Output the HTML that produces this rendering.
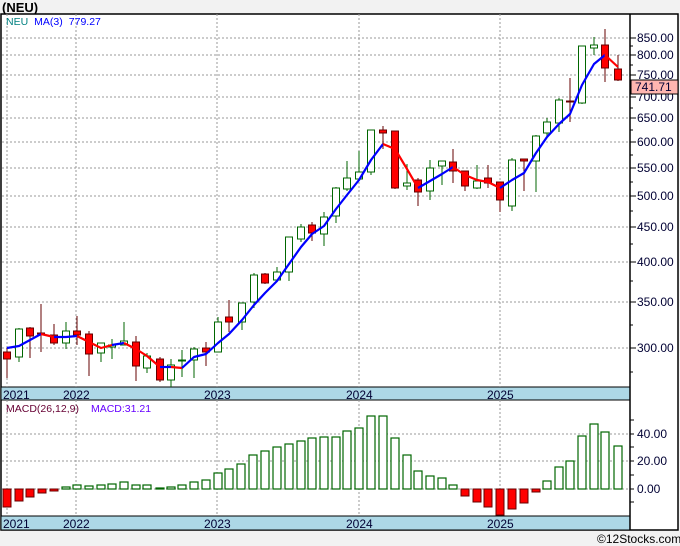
<!DOCTYPE html>
<html><head><meta charset="utf-8"><style>
html,body{margin:0;padding:0;background:#f2f2f2;}
svg{display:block;font-family:"Liberation Sans",sans-serif;}
</style></head><body>
<svg width="680" height="546" viewBox="0 0 680 546" xmlns="http://www.w3.org/2000/svg">
<rect x="0" y="0" width="680" height="546" fill="#f2f2f2"/>
<text x="2" y="12" font-size="13" font-weight="bold" fill="#000">(NEU)</text>
<rect x="1" y="14" width="677" height="516" fill="#fff" stroke="#000" stroke-width="1.5"/>
<!-- strips -->
<rect x="1" y="387" width="629" height="13" fill="#add8e6" stroke="#000" stroke-width="1"/>
<rect x="1" y="516" width="629" height="14" fill="#add8e6" stroke="#000" stroke-width="1"/>
<line x1="630" y1="14" x2="630" y2="530" stroke="#000" stroke-width="1.5"/>
<!-- grid -->
<g stroke="#999" stroke-width="1" stroke-dasharray="2,2">
<line x1="2" y1="38" x2="630" y2="38"/><line x1="2" y1="55" x2="630" y2="55"/><line x1="2" y1="75" x2="630" y2="75"/><line x1="2" y1="97" x2="630" y2="97"/><line x1="2" y1="118" x2="630" y2="118"/><line x1="2" y1="142" x2="630" y2="142"/><line x1="2" y1="168" x2="630" y2="168"/><line x1="2" y1="196" x2="630" y2="196"/><line x1="2" y1="227" x2="630" y2="227"/><line x1="2" y1="262" x2="630" y2="262"/><line x1="2" y1="302" x2="630" y2="302"/><line x1="2" y1="348" x2="630" y2="348"/>
<line x1="2" y1="434" x2="630" y2="434"/><line x1="2" y1="461" x2="630" y2="461"/><line x1="2" y1="489" x2="630" y2="489"/>
<line x1="7" y1="14" x2="7" y2="387"/><line x1="76" y1="14" x2="76" y2="387"/><line x1="217" y1="14" x2="217" y2="387"/><line x1="359" y1="14" x2="359" y2="387"/><line x1="500" y1="14" x2="500" y2="387"/>
<line x1="7" y1="400" x2="7" y2="516"/><line x1="76" y1="400" x2="76" y2="516"/><line x1="217" y1="400" x2="217" y2="516"/><line x1="359" y1="400" x2="359" y2="516"/><line x1="500" y1="400" x2="500" y2="516"/>
</g>
<!-- axis ticks & labels -->
<g stroke="#000" stroke-width="1">
<line x1="630" y1="38" x2="636" y2="38"/><line x1="630" y1="55" x2="636" y2="55"/><line x1="630" y1="75" x2="636" y2="75"/><line x1="630" y1="97" x2="636" y2="97"/><line x1="630" y1="118" x2="636" y2="118"/><line x1="630" y1="142" x2="636" y2="142"/><line x1="630" y1="168" x2="636" y2="168"/><line x1="630" y1="196" x2="636" y2="196"/><line x1="630" y1="227" x2="636" y2="227"/><line x1="630" y1="262" x2="636" y2="262"/><line x1="630" y1="302" x2="636" y2="302"/><line x1="630" y1="348" x2="636" y2="348"/>
<line x1="630" y1="130" x2="633" y2="130"/><line x1="630" y1="155" x2="633" y2="155"/><line x1="630" y1="182" x2="633" y2="182"/><line x1="630" y1="211" x2="633" y2="211"/><line x1="630" y1="244" x2="633" y2="244"/><line x1="630" y1="281" x2="633" y2="281"/><line x1="630" y1="325" x2="633" y2="325"/><line x1="630" y1="372" x2="633" y2="372"/><line x1="630" y1="108" x2="633" y2="108"/><line x1="630" y1="86" x2="633" y2="86"/><line x1="630" y1="65" x2="633" y2="65"/><line x1="630" y1="46" x2="633" y2="46"/>
<line x1="630" y1="420" x2="634" y2="420"/><line x1="630" y1="434" x2="634" y2="434"/><line x1="630" y1="447" x2="634" y2="447"/><line x1="630" y1="461" x2="634" y2="461"/><line x1="630" y1="475" x2="634" y2="475"/><line x1="630" y1="489" x2="634" y2="489"/><line x1="630" y1="502" x2="634" y2="502"/>
</g>
<g font-size="12" fill="#000033">
<text x="637" y="42">850.00</text><text x="637" y="59">800.00</text><text x="637" y="79">750.00</text><text x="637" y="101">700.00</text><text x="637" y="122">650.00</text><text x="637" y="146">600.00</text><text x="637" y="172">550.00</text><text x="637" y="200">500.00</text><text x="637" y="231">450.00</text><text x="637" y="266">400.00</text><text x="637" y="306">350.00</text><text x="637" y="352">300.00</text>
<text x="637" y="438">40.00</text><text x="637" y="465">20.00</text><text x="637" y="493">0.00</text>
</g>
<rect x="631" y="80" width="47" height="14" fill="#ffb6b0" stroke="#000" stroke-width="1"/>
<text x="635" y="91" font-size="12" fill="#000033">741.71</text>
<g font-size="12" fill="#000033">
<text x="3" y="399">2021</text><text x="63" y="399">2022</text><text x="204" y="399">2023</text><text x="346" y="399">2024</text><text x="487" y="399">2025</text>
<text x="3" y="528">2021</text><text x="63" y="528">2022</text><text x="204" y="528">2023</text><text x="346" y="528">2024</text><text x="487" y="528">2025</text>
</g>
<text x="6" y="25" font-size="10.5"><tspan fill="#008080">NEU</tspan><tspan fill="#0000ff" dx="6">MA(3)</tspan><tspan fill="#0000ff" dx="6">779.27</tspan></text>
<text x="6" y="412" font-size="10.5"><tspan fill="#660033">MACD(26,12,9)</tspan><tspan fill="#6600ff" dx="12">MACD:31.21</tspan></text>
<!-- candles -->
<g stroke-width="1">
<g stroke="#660000" fill="#ff0000">
<line x1="7" y1="348" x2="7" y2="378"/><rect x="3.5" y="352" width="7" height="7"/>
<line x1="30" y1="327" x2="30" y2="358"/><rect x="26.5" y="328" width="7" height="8"/>
<line x1="54" y1="324" x2="54" y2="345"/><rect x="50.5" y="335" width="7" height="8"/>
<line x1="77" y1="316" x2="77" y2="345"/><rect x="73.5" y="331" width="7" height="4"/>
<line x1="89" y1="331" x2="89" y2="376"/><rect x="85.5" y="334" width="7" height="20"/>
<line x1="136" y1="336" x2="136" y2="381"/><rect x="132.5" y="342" width="7" height="24"/>
<line x1="160" y1="357" x2="160" y2="382"/><rect x="156.5" y="359" width="7" height="21"/>
<line x1="206" y1="342" x2="206" y2="366"/><rect x="202.5" y="348" width="7" height="4"/>
<line x1="229" y1="300" x2="229" y2="332"/><rect x="225.5" y="317" width="7" height="5"/>
<line x1="265" y1="273" x2="265" y2="284"/><rect x="261.5" y="274" width="7" height="9"/>
<line x1="312" y1="222" x2="312" y2="241"/><rect x="308.5" y="225" width="7" height="8"/>
<line x1="383" y1="126" x2="383" y2="149"/><rect x="379.5" y="130" width="7" height="3"/>
<line x1="395" y1="131" x2="395" y2="189"/><rect x="391.5" y="131" width="7" height="57"/>
<line x1="418" y1="178" x2="418" y2="206"/><rect x="414.5" y="180" width="7" height="12"/>
<line x1="453" y1="149" x2="453" y2="183"/><rect x="449.5" y="162" width="7" height="9"/>
<line x1="465" y1="171" x2="465" y2="191"/><rect x="461.5" y="171" width="7" height="15"/>
<line x1="488" y1="165" x2="488" y2="188"/><rect x="484.5" y="178" width="7" height="5"/>
<line x1="500" y1="182" x2="500" y2="212"/><rect x="496.5" y="182" width="7" height="18"/>
<line x1="524" y1="159" x2="524" y2="191"/><rect x="520.5" y="159" width="7" height="2"/>
<line x1="570" y1="78" x2="570" y2="122"/><rect x="566.5" y="101" width="7" height="1"/>
<line x1="605" y1="29" x2="605" y2="82"/><rect x="601.5" y="45" width="7" height="23"/>
<line x1="618" y1="55" x2="618" y2="81"/><rect x="614.5" y="69" width="7" height="11"/>
<line x1="41" y1="304" x2="41" y2="352"/><rect x="37.5" y="333" width="7" height="1"/>
</g>
<g stroke="#006600" fill="#fff">
<line x1="19" y1="328" x2="19" y2="362"/><rect x="15.5" y="329" width="7" height="28"/>
<line x1="66" y1="322" x2="66" y2="349"/><rect x="62.5" y="331" width="7" height="12"/>
<line x1="101" y1="343" x2="101" y2="362"/><rect x="97.5" y="343" width="7" height="10"/>
<line x1="112" y1="339" x2="112" y2="359"/><rect x="108.5" y="345" width="7" height="2"/>
<line x1="124" y1="322" x2="124" y2="345"/><rect x="120.5" y="341" width="7" height="4"/>
<line x1="147" y1="353" x2="147" y2="373"/><rect x="143.5" y="356" width="7" height="12"/>
<line x1="171" y1="359" x2="171" y2="387"/><rect x="167.5" y="365" width="7" height="15"/>
<line x1="182" y1="350" x2="182" y2="377"/><rect x="178.5" y="360" width="7" height="1"/>
<line x1="194" y1="347" x2="194" y2="378"/><rect x="190.5" y="349" width="7" height="11"/>
<line x1="218" y1="317" x2="218" y2="352"/><rect x="214.5" y="322" width="7" height="30"/>
<line x1="242" y1="303" x2="242" y2="330"/><rect x="238.5" y="303" width="7" height="19"/>
<line x1="254" y1="273" x2="254" y2="308"/><rect x="250.5" y="275" width="7" height="27"/>
<line x1="277" y1="267" x2="277" y2="281"/><rect x="273.5" y="272" width="7" height="8"/>
<line x1="289" y1="237" x2="289" y2="281"/><rect x="285.5" y="237" width="7" height="35"/>
<line x1="301" y1="224" x2="301" y2="242"/><rect x="297.5" y="227" width="7" height="12"/>
<line x1="324" y1="212" x2="324" y2="246"/><rect x="320.5" y="217" width="7" height="17"/>
<line x1="336" y1="187" x2="336" y2="223"/><rect x="332.5" y="188" width="7" height="28"/>
<line x1="347" y1="161" x2="347" y2="191"/><rect x="343.5" y="178" width="7" height="11"/>
<line x1="359" y1="151" x2="359" y2="179"/><rect x="355.5" y="172" width="7" height="7"/>
<line x1="371" y1="130" x2="371" y2="175"/><rect x="367.5" y="130" width="7" height="42"/>
<line x1="407" y1="164" x2="407" y2="190"/><rect x="403.5" y="183" width="7" height="3"/>
<line x1="430" y1="160" x2="430" y2="200"/><rect x="426.5" y="168" width="7" height="23"/>
<line x1="442" y1="161" x2="442" y2="185"/><rect x="438.5" y="161" width="7" height="5"/>
<line x1="477" y1="165" x2="477" y2="189"/><rect x="473.5" y="181" width="7" height="7"/>
<line x1="512" y1="158" x2="512" y2="211"/><rect x="508.5" y="160" width="7" height="46"/>
<line x1="536" y1="135" x2="536" y2="192"/><rect x="532.5" y="136" width="7" height="25"/>
<line x1="547" y1="118" x2="547" y2="138"/><rect x="543.5" y="122" width="7" height="11"/>
<line x1="559" y1="98" x2="559" y2="132"/><rect x="555.5" y="100" width="7" height="23"/>
<line x1="582" y1="46" x2="582" y2="104"/><rect x="578.5" y="46" width="7" height="57"/>
<line x1="594" y1="37" x2="594" y2="55"/><rect x="590.5" y="45" width="7" height="3"/>
</g>
</g>
<!-- MA line -->
<g fill="none" stroke-width="2.2" stroke-linejoin="round">
<polyline stroke="#0000ff" points="7,348 19,346 30,340 41,334"/>
<polyline stroke="#ff0000" points="41,334 54,337"/>
<polyline stroke="#0000ff" points="54,337 66,337 77,336"/>
<polyline stroke="#ff0000" points="77,336 89,342 101,348 112,345"/>
<polyline stroke="#0000ff" points="112,345 124,343"/>
<polyline stroke="#ff0000" points="124,343 136,349 147,356 160,367"/>
<polyline stroke="#0000ff" points="160,367 171,367"/>
<polyline stroke="#ff0000" points="171,367 182,368"/>
<polyline stroke="#0000ff" points="182,368 194,357 206,354 218,343 229,334 242,320 254,305 265,293 277,281 289,264 301,247 312,234 324,226 336,209 347,195 359,180 371,160 383,144"/>
<polyline stroke="#ff0000" points="383,144 395,149 407,169 418,188"/>
<polyline stroke="#0000ff" points="418,188 430,181 442,174 453,167"/>
<polyline stroke="#ff0000" points="453,167 465,175 477,180 488,182 500,188"/>
<polyline stroke="#0000ff" points="500,188 512,180 524,173 536,153 547,137 559,124 570,114 582,85 594,64 605,55"/>
<polyline stroke="#ff0000" points="605,55 618,67"/>
</g>
<!-- MACD bars -->
<g stroke="#660000" fill="#ff0000" stroke-width="1">
<rect x="3" y="489" width="8" height="18"/><rect x="15" y="489" width="8" height="12"/><rect x="26" y="489" width="8" height="8"/><rect x="38" y="489" width="8" height="4"/><rect x="50" y="489" width="8" height="2"/>
<rect x="461" y="489" width="8" height="7"/><rect x="473" y="489" width="8" height="13"/><rect x="484" y="489" width="8" height="18"/><rect x="496" y="489" width="8" height="26"/><rect x="508" y="489" width="8" height="20"/><rect x="520" y="489" width="8" height="14"/><rect x="532" y="489" width="8" height="3"/>
</g>
<g stroke="#006600" fill="#fff" stroke-width="1.2">
<rect x="62" y="487" width="8" height="2"/><rect x="73" y="485" width="8" height="4"/><rect x="85" y="486" width="8" height="3"/><rect x="97" y="485" width="8" height="4"/><rect x="108" y="484" width="8" height="5"/><rect x="120" y="482" width="8" height="7"/><rect x="132" y="485" width="8" height="4"/><rect x="143" y="485" width="8" height="4"/><rect x="156" y="488" width="8" height="1" fill="#006600"/><rect x="167" y="487" width="8" height="2"/><rect x="178" y="485" width="8" height="4"/><rect x="190" y="482" width="8" height="7"/><rect x="202" y="480" width="8" height="9"/><rect x="214" y="473" width="8" height="16"/><rect x="225" y="469" width="8" height="20"/><rect x="237" y="464" width="8" height="25"/><rect x="249" y="455" width="8" height="34"/><rect x="261" y="451" width="8" height="38"/><rect x="273" y="447" width="8" height="42"/><rect x="285" y="444" width="8" height="45"/><rect x="297" y="441" width="8" height="48"/><rect x="308" y="438" width="8" height="51"/><rect x="320" y="437" width="8" height="52"/><rect x="332" y="437" width="8" height="52"/><rect x="343" y="431" width="8" height="58"/><rect x="355" y="428" width="8" height="61"/><rect x="367" y="416" width="8" height="73"/><rect x="379" y="416" width="8" height="73"/><rect x="391" y="438" width="8" height="51"/><rect x="403" y="455" width="8" height="34"/><rect x="414" y="471" width="8" height="18"/><rect x="426" y="476" width="8" height="13"/><rect x="438" y="478" width="8" height="11"/><rect x="449" y="485" width="8" height="4"/>
<rect x="543" y="481" width="8" height="8"/><rect x="555" y="467" width="8" height="22"/><rect x="566" y="461" width="8" height="28"/><rect x="578" y="436" width="8" height="53"/><rect x="590" y="424" width="8" height="65"/><rect x="601" y="432" width="8" height="57"/><rect x="614" y="446" width="8" height="43"/>
</g>
<text x="597" y="543" font-size="12" fill="#000">©12Stocks.com</text>
</svg>
</body></html>
